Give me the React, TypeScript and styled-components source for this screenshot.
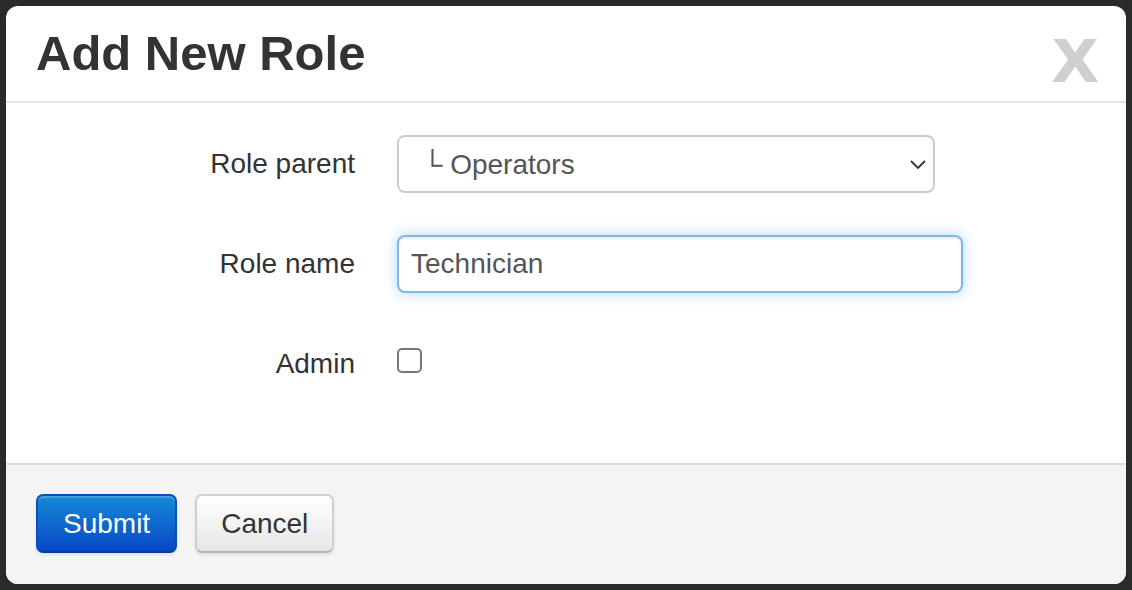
import React from "react";
import styled, { createGlobalStyle } from "styled-components";

const GlobalStyle = createGlobalStyle`
  html, body {
    margin: 0;
    padding: 0;
    background: #2a2a2a;
  }
  body {
    font-family: "Liberation Sans", Arial, Helvetica, sans-serif;
  }
  * { box-sizing: border-box; }
`;

const Backdrop = styled.div`
  width: 1132px;
  height: 590px;
  padding: 6px;
  background: #2a2a2a;
`;

const Dialog = styled.div`
  width: 1120px;
  height: 578px;
  background: #fff;
  border-radius: 12px;
  overflow: hidden;
  display: flex;
  flex-direction: column;
`;

const Header = styled.div`
  height: 97px;
  flex: none;
  display: flex;
  align-items: center;
  justify-content: space-between;
  padding: 0 30px 2px 30px;
  border-bottom: 2px solid #e5e5e5;
`;

const Title = styled.h3`
  margin: 0;
  font-size: 49px;
  font-weight: 700;
  color: #333;
  line-height: 1;
  padding-top: 1px;
`;

const Close = styled.button`
  border: 0;
  background: none;
  padding: 0;
  margin-top: 16px;
  margin-right: 1px;
  font-family: "Liberation Sans", Arial, sans-serif;
  font-size: 60px;
  font-weight: 700;
  line-height: 1;
  color: #cfcfcf;
  -webkit-text-stroke: 2px #cfcfcf;
  transform: scaleX(1.08);
  cursor: pointer;
`;

const Body = styled.div`
  flex: 1;
  padding: 32px 0 0 0;
  display: flex;
  flex-direction: column;
  gap: 42px;
`;

const Row = styled.div<{ $h?: number }>`
  display: grid;
  grid-template-columns: 349px auto;
  column-gap: 42px;
  align-items: center;
  height: ${(p) => p.$h ?? 58}px;
`;

const Label = styled.label<{ $nudge?: number }>`
  text-align: right;
  font-size: 28px;
  color: #333;
  padding-top: ${(p) => p.$nudge ?? 0}px;
`;

const SelectWrap = styled.div`
  position: relative;
  width: 538px;
  height: 58px;
`;

const Select = styled.select`
  appearance: none;
  -webkit-appearance: none;
  width: 100%;
  height: 100%;
  border: 2px solid #ccc;
  border-radius: 8px;
  background: #fff;
  padding: 0 40px 0 8px;
  font-family: "Liberation Sans", Arial, sans-serif;
  font-size: 28px;
  color: #555;
  outline: none;
`;

const Chevron = styled.svg`
  position: absolute;
  right: 8px;
  top: 23px;
  pointer-events: none;
`;

const TextInput = styled.input`
  width: 566px;
  height: 58px;
  border: 2px solid #7ab8ee;
  border-radius: 8px;
  padding: 0 12px;
  font-family: "Liberation Sans", Arial, sans-serif;
  font-size: 28px;
  color: #555;
  outline: none;
  box-shadow: inset 0 2px 2px rgba(0, 0, 0, 0.075), 0 0 14px rgba(82, 168, 236, 0.45);
`;

const Check = styled.input`
  appearance: none;
  -webkit-appearance: none;
  margin: 0;
  width: 25px;
  height: 25px;
  border: 2px solid #777;
  border-radius: 5px;
  background: #fff;
`;

const Footer = styled.div`
  flex: none;
  height: 121px;
  background: #f4f4f4;
  border-top: 2px solid #dddddd;
  display: flex;
  align-items: center;
  gap: 18px;
  padding: 0 30px 2px 30px;
`;

const Button = styled.button<{ $primary?: boolean }>`
  height: 59px;
  padding: 0 ${(p) => (p.$primary ? 25 : 24)}px;
  border-radius: 7px;
  font-family: "Liberation Sans", Arial, sans-serif;
  font-size: 28px;
  cursor: pointer;
  color: ${(p) => (p.$primary ? "#fff" : "#333")};
  border: 2px solid ${(p) => (p.$primary ? "#0a4fb8" : "#cfcfcf")};
  border-bottom-color: ${(p) => (p.$primary ? "#083f98" : "#b5b5b5")};
  background: ${(p) =>
    p.$primary
      ? "linear-gradient(to bottom, #1689d6, #0848c6)"
      : "linear-gradient(to bottom, #ffffff, #e6e6e6)"};
  box-shadow: inset 0 2px 0 rgba(255, 255, 255, 0.2), 0 2px 3px rgba(0, 0, 0, 0.08);
`;

export default function App() {
  return (
    <>
      <GlobalStyle />
      <Backdrop>
        <Dialog>
          <Header>
            <Title>Add New Role</Title>
            <Close aria-label="Close">X</Close>
          </Header>
          <Body>
            <Row>
              <Label>Role parent</Label>
              <SelectWrap>
                <Select defaultValue="ops">
                  <option value="ops">{"\u00a0\u00a0\u2514 Operators"}</option>
                </Select>
                <Chevron width="18" height="12" viewBox="0 0 18 12">
                  <path d="M2 3 L9 10 L16 3" fill="none" stroke="#333" strokeWidth="1.8" />
                </Chevron>
              </SelectWrap>
            </Row>
            <Row>
              <Label>Role name</Label>
              <TextInput defaultValue="Technician" />
            </Row>
            <Row $h={50}>
              <Label $nudge={8}>Admin</Label>
              <Check type="checkbox" />
            </Row>
          </Body>
          <Footer>
            <Button $primary>Submit</Button>
            <Button>Cancel</Button>
          </Footer>
        </Dialog>
      </Backdrop>
    </>
  );
}
